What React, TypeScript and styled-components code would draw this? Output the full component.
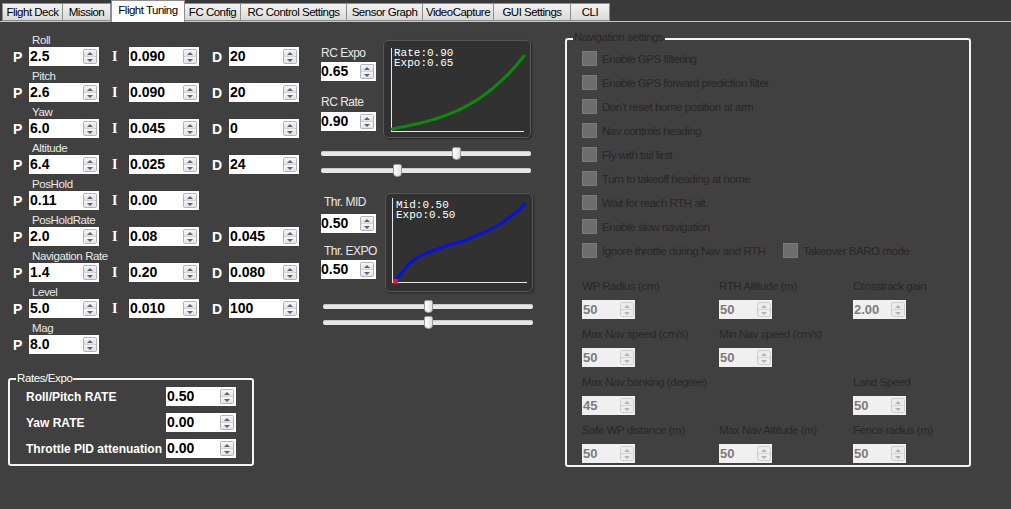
import React from "react";
import styled, { createGlobalStyle } from "styled-components";

const GlobalStyle = createGlobalStyle`
  html, body { margin: 0; padding: 0; background: #404040; }
  body { font-family: "Liberation Sans", Arial, sans-serif; }
  * { box-sizing: border-box; }
`;

const Window = styled.div`
  width: 1011px;
  height: 509px;
  background: #404040;
  overflow: hidden;
  display: flex;
  flex-direction: column;
  font-family: "Liberation Sans", Arial, sans-serif;
`;

const TabStrip = styled.div`
  height: 22px;
  flex: none;
  display: flex;
  align-items: flex-end;
  padding-left: 2px;
  background: #3a3a3a;
  border-bottom: 1px solid #c6c6c6;
`;

const Tab = styled.div<{ $w: number; $active?: boolean }>`
  width: ${(p) => p.$w}px;
  height: ${(p) => (p.$active ? 22 : 18)}px;
  margin-bottom: ${(p) => (p.$active ? -1 : 0)}px;
  background: ${(p) =>
    p.$active ? "#ffffff" : "linear-gradient(#f4f4f4, #e6e6e6 50%, #d8d8d8)"};
  border: 1px solid #8c8c8c;
  border-bottom: ${(p) => (p.$active ? "none" : "1px solid #8c8c8c")};
  border-left-width: ${(p) => (p.$active ? 1 : 0)}px;
  font-size: 11.5px;
  letter-spacing: -0.5px;
  color: #000;
  display: flex;
  justify-content: center;
  align-items: ${(p) => (p.$active ? "flex-start" : "center")};
  padding-top: ${(p) => (p.$active ? 3 : 0)}px;
  white-space: nowrap;
  &:first-child { border-left-width: 1px; }
`;

const Content = styled.div`
  flex: 1;
  display: flex;
  align-items: flex-start;
`;

/* ---------- spin box ---------- */

const SpinBox = styled.div<{ $w: number; $disabled?: boolean }>`
  width: ${(p) => p.$w}px;
  height: 19px;
  flex: none;
  background: ${(p) => (p.$disabled ? "#f0f0f0" : "#ffffff")};
  display: flex;
  align-items: center;
  padding-right: ${(p) => (p.$disabled ? 1 : 2)}px;
`;

const SpinValue = styled.span<{ $disabled?: boolean; $pad: number; $size: number }>`
  flex: 1;
  padding-left: ${(p) => p.$pad}px;
  font-weight: bold;
  font-size: ${(p) => p.$size}px;
  line-height: 19px;
  color: ${(p) => (p.$disabled ? "#7c7c7c" : "#000000")};
  white-space: nowrap;
  overflow: hidden;
`;

const Spinner = styled.div<{ $disabled?: boolean }>`
  width: 14px;
  height: 15px;
  flex: none;
  display: flex;
  flex-direction: column;
  border: 1px solid ${(p) => (p.$disabled ? "#cfcfcf" : "#aeb4bd")};
  border-radius: 2px;
  overflow: hidden;
`;

const SpinHalf = styled.div<{ $disabled?: boolean }>`
  flex: 1;
  display: flex;
  align-items: center;
  justify-content: center;
  background: ${(p) =>
    p.$disabled ? "#ececec" : "linear-gradient(#f8f8f8, #e3e3e3)"};
  & + & { border-top: 1px solid ${(p) => (p.$disabled ? "#d4d4d4" : "#b9bec6")}; }
`;

const Arrow = styled.span<{ $down?: boolean; $disabled?: boolean }>`
  width: 0;
  height: 0;
  border-left: 3px solid transparent;
  border-right: 3px solid transparent;
  ${(p) =>
    p.$down
      ? `border-top: 3px solid ${p.$disabled ? "#b4b4b4" : "#58657a"};`
      : `border-bottom: 3px solid ${p.$disabled ? "#b4b4b4" : "#58657a"};`}
`;

function Spin({
  value,
  w,
  disabled,
  pad = 1,
  size = 14,
}: {
  value: string;
  w: number;
  disabled?: boolean;
  pad?: number;
  size?: number;
}) {
  return (
    <SpinBox $w={w} $disabled={disabled}>
      <SpinValue $disabled={disabled} $pad={pad} $size={size}>
        {value}
      </SpinValue>
      <Spinner $disabled={disabled}>
        <SpinHalf $disabled={disabled}>
          <Arrow $disabled={disabled} />
        </SpinHalf>
        <SpinHalf $disabled={disabled}>
          <Arrow $down $disabled={disabled} />
        </SpinHalf>
      </Spinner>
    </SpinBox>
  );
}

/* ---------- PID column ---------- */

const LeftColumn = styled.div`
  width: 299px;
  flex: none;
  padding-top: 11px;
  display: flex;
  flex-direction: column;
`;

const PidGroup = styled.div`
  display: flex;
  flex-direction: column;
  margin-bottom: 3px;
`;

const GroupLabel = styled.div`
  height: 14px;
  line-height: 14px;
  font-size: 11.5px;
  letter-spacing: -0.4px;
  color: #e8e8e8;
  padding-left: 32px;
`;

const PidRow = styled.div`
  display: flex;
  align-items: center;
  height: 19px;
`;

const TermLetter = styled.span<{ $w: number; $serif?: boolean }>`
  width: ${(p) => p.$w}px;
  flex: none;
  padding-left: 13px;
  font-weight: bold;
  font-size: 14px;
  color: #ffffff;
  font-family: ${(p) =>
    p.$serif ? `"Liberation Serif", "Times New Roman", serif` : `"Liberation Sans", Arial, sans-serif`};
`;

const GroupBox = styled.div<{ $w: number }>`
  position: relative;
  width: ${(p) => p.$w}px;
  border: 2px solid #f4f4f4;
  border-radius: 3px;
`;

const Legend = styled.span<{ $color: string; $top: number }>`
  position: absolute;
  top: ${(p) => p.$top}px;
  left: 6px;
  padding: 0 1px;
  background: #404040;
  font-size: 11.5px;
  line-height: 13px;
  letter-spacing: -0.4px;
  color: ${(p) => p.$color};
  white-space: nowrap;
`;

const RatesBox = styled(GroupBox)`
  margin: 21px 0 0 8px;
  padding: 7px 0 6px 16px;
  display: flex;
  flex-direction: column;
  gap: 7px;
`;

const RateRow = styled.div`
  display: flex;
  align-items: center;
  height: 19px;
`;

const RateLabel = styled.span`
  width: 140px;
  flex: none;
  font-weight: bold;
  font-size: 12px;
  color: #ffffff;
  white-space: nowrap;
`;

/* ---------- middle column ---------- */

const MiddleColumn = styled.div`
  width: 212px;
  flex: none;
  margin-left: 22px;
  padding-top: 18px;
  display: flex;
  flex-direction: column;
`;

const CurveBlock = styled.div<{ $gap: number; $top: number }>`
  display: flex;
  gap: ${(p) => p.$gap}px;
  margin-top: ${(p) => p.$top}px;
`;

const MiniColumn = styled.div<{ $top: number }>`
  width: 55px;
  flex: none;
  padding-top: ${(p) => p.$top}px;
  display: flex;
  flex-direction: column;
`;

const MiniLabel = styled.div<{ $mt?: number; $mb: number; $indent?: number }>`
  height: 14px;
  line-height: 14px;
  font-size: 12px;
  letter-spacing: -0.5px;
  color: #e8e8e8;
  white-space: nowrap;
  margin-top: ${(p) => p.$mt || 0}px;
  margin-bottom: ${(p) => p.$mb}px;
  padding-left: ${(p) => p.$indent || 0}px;
`;

const GraphBox = styled.div<{ $h: number }>`
  width: 148px;
  height: ${(p) => p.$h}px;
  flex: none;
  background: #313131;
  border: 1px solid #585858;
  border-radius: 5px;
  box-shadow: 1px 1px 2px rgba(0, 0, 0, 0.45);
  overflow: hidden;
`;

const SliderStack = styled.div<{ $top: number; $left: number; $gap: number }>`
  display: flex;
  flex-direction: column;
  gap: ${(p) => p.$gap}px;
  margin-top: ${(p) => p.$top}px;
  margin-left: ${(p) => p.$left}px;
`;

const SliderTrack = styled.div`
  position: relative;
  width: 210px;
  height: 13px;
  display: flex;
  align-items: center;
`;

const TrackBar = styled.div`
  flex: 1;
  height: 5px;
  background: #e6e6e6;
  border-top: 1px solid #c9c9c9;
  border-radius: 2px;
`;

const Thumb = styled.div`
  position: absolute;
  top: 0;
  width: 9px;
  height: 13px;
  background: linear-gradient(90deg, #fdfdfd, #e2e2e2);
  border: 1px solid #9a9a9a;
  border-radius: 2px 2px 4px 4px;
`;

function Slider({ pos }: { pos: number }) {
  return (
    <SliderTrack>
      <TrackBar />
      <Thumb style={{ left: pos * 210 - 4.5 }} />
    </SliderTrack>
  );
}

function ExpoGraph() {
  const pts: string[] = [];
  for (let i = 0; i <= 24; i++) {
    const t = i / 24;
    const f = t * 0.35 + 0.65 * t * t * t;
    pts.push(`${(8 + 132 * t).toFixed(1)},${(88 - 73 * f).toFixed(1)}`);
  }
  return (
    <GraphBox $h={98}>
      <svg width="146" height="96" viewBox="0 0 146 96">
        <line x1="7.5" y1="7" x2="7.5" y2="90" stroke="#e6e6e6" strokeWidth="1" />
        <line x1="7" y1="90.5" x2="140" y2="90.5" stroke="#e6e6e6" strokeWidth="1" />
        <text x="10" y="15" fontFamily="'Liberation Mono', monospace" fontSize="11" fill="#ffffff">
          Rate:0.90
        </text>
        <text x="10" y="25" fontFamily="'Liberation Mono', monospace" fontSize="11" fill="#ffffff">
          Expo:0.65
        </text>
        <polyline points={pts.join(" ")} fill="none" stroke="#0d8a0d" strokeWidth="3" strokeLinejoin="round" strokeLinecap="round" />
      </svg>
    </GraphBox>
  );
}

function ThrottleGraph() {
  const pts =
    "9,88 10,86 17,77 24,69 32,63 41,59 49,56 57,53 66,50 74,48 83,45 91,41 99,38 107,34 116,29 124,23 132,17 139,10";
  return (
    <GraphBox $h={99}>
      <svg width="146" height="97" viewBox="0 0 146 97">
        <line x1="6.5" y1="4" x2="6.5" y2="88" stroke="#e6e6e6" strokeWidth="1" />
        <line x1="6" y1="88.5" x2="141" y2="88.5" stroke="#e6e6e6" strokeWidth="1" />
        <text x="10" y="14" fontFamily="'Liberation Mono', monospace" fontSize="11" fill="#ffffff">
          Mid:0.50
        </text>
        <text x="10" y="24" fontFamily="'Liberation Mono', monospace" fontSize="11" fill="#ffffff">
          Expo:0.50
        </text>
        <polyline points={pts} fill="none" stroke="#0a10e0" strokeWidth="3" strokeLinejoin="round" strokeLinecap="round" />
        <rect x="7" y="85" width="5" height="5" fill="#ff1010" />
      </svg>
    </GraphBox>
  );
}

/* ---------- navigation settings ---------- */

const NavBox = styled(GroupBox)`
  margin: 16px 0 0 32px;
  padding: 6px 0 2px 15px;
  border-color: #f2f2f2;
`;

const CheckRow = styled.div`
  height: 24px;
  display: flex;
  align-items: center;
`;

const CheckItem = styled.div<{ $w?: number }>`
  display: flex;
  align-items: center;
  gap: 5px;
  width: ${(p) => (p.$w ? `${p.$w}px` : "auto")};
`;

const CheckSquare = styled.span`
  width: 15px;
  height: 15px;
  flex: none;
  background: #6d6d6d;
  border: 1px solid #7a7a7a;
`;

const DimText = styled.span`
  font-size: 11.5px;
  line-height: 14px;
  padding-top: 2px;
  letter-spacing: -0.45px;
  color: #282828;
  white-space: nowrap;
`;

const NumberGrid = styled.div`
  margin-top: 17px;
  display: grid;
  grid-template-columns: 137px 134px 110px;
  row-gap: 8px;
`;

const NumberCell = styled.div`
  display: flex;
  flex-direction: column;
  gap: 7px;
`;

const NumberLabel = styled(DimText)`
  display: block;
  height: 14px;
  padding-top: 0;
`;

const checks = [
  "Enable GPS filtering",
  "Enable GPS forward prediction filter",
  "Don't reset home position at arm",
  "Nav controls heading",
  "Fly with tail first",
  "Turn to takeoff heading at home",
  "Wait for reach RTH alt.",
  "Enable slow navigation",
];

const numberFields: ({ label: string; value: string } | null)[] = [
  { label: "WP Radius (cm)", value: "50" },
  { label: "RTH Altitude (m)", value: "50" },
  { label: "Crosstrack gain", value: "2.00" },
  { label: "Max Nav speed (cm/s)", value: "50" },
  { label: "Min Nav speed (cm/s)", value: "50" },
  null,
  { label: "Max Nav banking (degree)", value: "45" },
  null,
  { label: "Land Speed", value: "50" },
  { label: "Safe WP distance (m)", value: "50" },
  { label: "Max Nav Altitude (m)", value: "50" },
  { label: "Fence radius (m)", value: "50" },
];

const tabs = [
  { label: "Flight Deck", w: 61 },
  { label: "Mission", w: 48 },
  { label: "Flight Tuning", w: 74, active: true },
  { label: "FC Config", w: 56 },
  { label: "RC Control Settings", w: 106 },
  { label: "Sensor Graph", w: 76 },
  { label: "VideoCapture", w: 71 },
  { label: "GUI Settings", w: 77 },
  { label: "CLI", w: 39 },
];

const pids: { name: string; p: string; i?: string; d?: string }[] = [
  { name: "Roll", p: "2.5", i: "0.090", d: "20" },
  { name: "Pitch", p: "2.6", i: "0.090", d: "20" },
  { name: "Yaw", p: "6.0", i: "0.045", d: "0" },
  { name: "Altitude", p: "6.4", i: "0.025", d: "24" },
  { name: "PosHold", p: "0.11", i: "0.00" },
  { name: "PosHoldRate", p: "2.0", i: "0.08", d: "0.045" },
  { name: "Navigation Rate", p: "1.4", i: "0.20", d: "0.080" },
  { name: "Level", p: "5.0", i: "0.010", d: "100" },
  { name: "Mag", p: "8.0" },
];

const rates = [
  { label: "Roll/Pitch RATE", value: "0.50" },
  { label: "Yaw RATE", value: "0.00" },
  { label: "Throttle PID attenuation", value: "0.00" },
];

export default function App() {
  return (
    <Window>
      <GlobalStyle />
      <TabStrip>
        {tabs.map((t) => (
          <Tab key={t.label} $w={t.w} $active={t.active}>
            {t.label}
          </Tab>
        ))}
      </TabStrip>
      <Content>
        <LeftColumn>
          {pids.map((g) => (
            <PidGroup key={g.name}>
              <GroupLabel>{g.name}</GroupLabel>
              <PidRow>
                <TermLetter $w={29}>P</TermLetter>
                <Spin value={g.p} w={70} />
                {g.i !== undefined && (
                  <>
                    <TermLetter $w={30} $serif>I</TermLetter>
                    <Spin value={g.i} w={70} />
                  </>
                )}
                {g.d !== undefined && (
                  <>
                    <TermLetter $w={30}>D</TermLetter>
                    <Spin value={g.d} w={70} />
                  </>
                )}
              </PidRow>
            </PidGroup>
          ))}
          <RatesBox $w={246}>
            <Legend $color="#ffffff" $top={-8}>Rates/Expo</Legend>
            {rates.map((r) => (
              <RateRow key={r.label}>
                <RateLabel>{r.label}</RateLabel>
                <Spin value={r.value} w={70} />
              </RateRow>
            ))}
          </RatesBox>
        </LeftColumn>

        <MiddleColumn>
          <CurveBlock $gap={7} $top={0}>
            <MiniColumn $top={6}>
              <MiniLabel $mb={2}>RC Expo</MiniLabel>
              <Spin value="0.65" w={55} pad={0} />
              <MiniLabel $mt={14} $mb={3}>RC Rate</MiniLabel>
              <Spin value="0.90" w={55} pad={0} />
            </MiniColumn>
            <ExpoGraph />
          </CurveBlock>
          <SliderStack $top={9} $left={0} $gap={4}>
            <Slider pos={0.643} />
            <Slider pos={0.362} />
          </SliderStack>
          <CurveBlock $gap={9} $top={16}>
            <MiniColumn $top={2}>
              <MiniLabel $mb={5} $indent={3}>Thr. MID</MiniLabel>
              <Spin value="0.50" w={55} pad={0} />
              <MiniLabel $mt={11} $mb={2} $indent={3}>Thr. EXPO</MiniLabel>
              <Spin value="0.50" w={55} pad={0} />
            </MiniColumn>
            <ThrottleGraph />
          </CurveBlock>
          <SliderStack $top={8} $left={2} $gap={3}>
            <Slider pos={0.5} />
            <Slider pos={0.5} />
          </SliderStack>
        </MiddleColumn>

        <NavBox $w={406}>
          <Legend $color="#282828" $top={-9}>Navigation settings</Legend>
          {checks.map((c) => (
            <CheckRow key={c}>
              <CheckItem>
                <CheckSquare />
                <DimText>{c}</DimText>
              </CheckItem>
            </CheckRow>
          ))}
          <CheckRow>
            <CheckItem $w={201}>
              <CheckSquare />
              <DimText>Ignore throttle during Nav and RTH</DimText>
            </CheckItem>
            <CheckItem>
              <CheckSquare />
              <DimText>Takeover BARO mode</DimText>
            </CheckItem>
          </CheckRow>
          <NumberGrid>
            {numberFields.map((f, idx) =>
              f ? (
                <NumberCell key={idx}>
                  <NumberLabel>{f.label}</NumberLabel>
                  <Spin value={f.value} w={53} disabled size={13} />
                </NumberCell>
              ) : (
                <div key={idx} />
              )
            )}
          </NumberGrid>
        </NavBox>
      </Content>
    </Window>
  );
}
